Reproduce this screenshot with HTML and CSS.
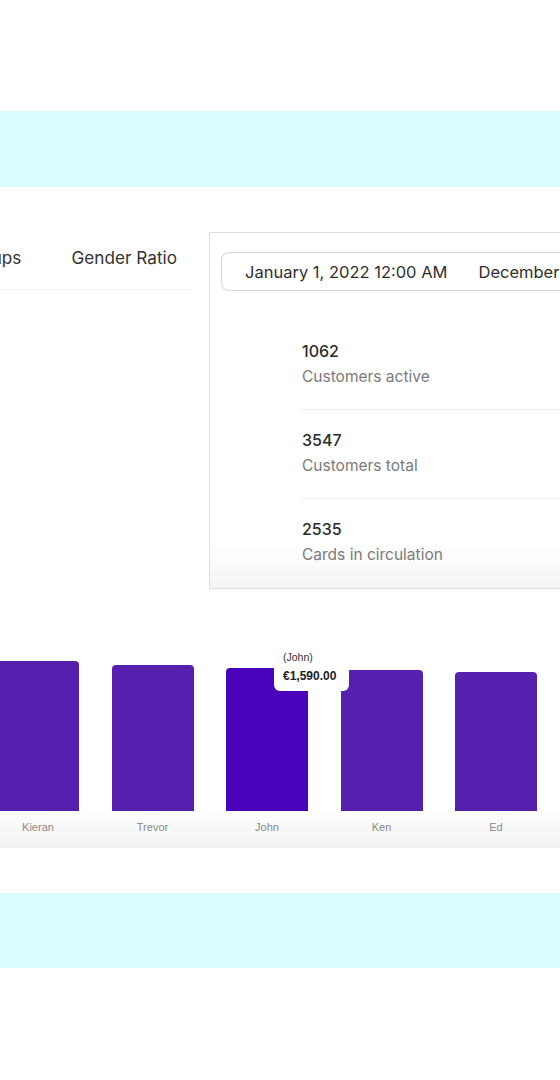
FILE: index.html
```html
<!DOCTYPE html>
<html lang="en">
<head>
  <meta charset="UTF-8">
  <title>Customer Dashboard</title>
  <link rel="stylesheet" href="styles.css">
</head>
<body>
  <div class="band band-top"></div>

  <div class="overview">
    <div class="tabs-col">
      <div class="tabs">
        <span class="tab">Age Groups</span>
        <span class="tab">Gender Ratio</span>
      </div>
    </div>
    <div class="panel">
      <div class="date-range">
        <span>January 1, 2022 12:00 AM</span>
        <span>December 31, 2022 11:59 PM</span>
      </div>
      <ul class="stats">
        <li class="stat">
          <div class="stat-value">1062</div>
          <div class="stat-label">Customers active</div>
        </li>
        <li class="stat">
          <div class="stat-value">3547</div>
          <div class="stat-label">Customers total</div>
        </li>
        <li class="stat">
          <div class="stat-value">2535</div>
          <div class="stat-label">Cards in circulation</div>
        </li>
      </ul>
    </div>
  </div>

  <div class="chart">
    <div class="bars">
      <div class="bar-col"><div class="bar" style="height:150px"></div></div>
      <div class="bar-col"><div class="bar" style="height:146px"></div></div>
      <div class="bar-col">
        <div class="bar active" style="height:143px"></div>
        <div class="tooltip">
          <div class="tooltip-name">(John)</div>
          <div class="tooltip-value">€1,590.00</div>
        </div>
      </div>
      <div class="bar-col"><div class="bar" style="height:141px"></div></div>
      <div class="bar-col"><div class="bar" style="height:139px"></div></div>
    </div>
    <div class="labels">
      <span class="label">Kieran</span>
      <span class="label">Trevor</span>
      <span class="label">John</span>
      <span class="label">Ken</span>
      <span class="label">Ed</span>
    </div>
  </div>

  <div class="band band-bottom"></div>
</body>
</html>
```

FILE: styles.css
```css
html, body { margin: 0; padding: 0; }
body { width: 560px; height: 1080px; overflow: hidden; background: #fff; font-family: Inter, "Noto Sans", sans-serif; color: #2b2b2b; }

.band { height: 76px; background: #dbfdfe; }
.band-top { margin-top: 111px; }
.band-bottom { margin-top: 45px; height: 75px; }

.overview { display: flex; margin-top: 45px; height: 357px; }
.tabs-col { width: 193px; flex-shrink: 0; overflow: hidden; }
.tabs { display: flex; justify-content: flex-end; gap: 50px; padding: 16px 16px 21px 0; border-bottom: 1px solid #f0f0f0; white-space: nowrap; }
.tab { font-size: 17.2px; line-height: 20px; color: #333; }

.panel { margin-left: 16px; width: 420px; flex-shrink: 0; border: 1px solid #d9dddd; border-right: none; box-sizing: border-box; background: linear-gradient(to bottom, #fff 0, #fff 88%, #f4f4f4 100%); }
.date-range { display: flex; gap: 31px; margin: 19px 0 0 11px; height: 39px; box-sizing: border-box; padding-left: 23px; align-items: center; border: 1px solid #d6d6d6; border-right: none; border-radius: 8px 0 0 8px; font-size: 16.5px; color: #2f2f2f; white-space: nowrap; }

.stats { list-style: none; margin: 48px 0 0 92px; padding: 0; }
.stat { padding: 0 0 20px; border-bottom: 1px solid #eeeeee; }
.stat + .stat { padding-top: 18px; }
.stat:last-child { border-bottom: none; }
.stat-value { font-size: 16px; line-height: 24px; font-weight: 500; color: #2b2b2b; }
.stat-label { font-size: 15.5px; line-height: 24px; color: #7a7a7a; margin-top: 2px; }

.chart { background: linear-gradient(to bottom, #fff 0, #fff 85%, #f1f1f1 100%); }
.bars { display: flex; align-items: flex-end; gap: 32.5px; height: 222px; margin-left: -3px; }
.bar-col { position: relative; width: 82px; flex-shrink: 0; }
.bar { background: #5520ad; border-radius: 4px 4px 0 0; }
.bar.active { background: #4a02bb; }
.tooltip { position: absolute; left: 48px; top: -22px; width: 75px; padding: 5px 0 6px 9px; box-sizing: border-box; background: #fff; border-radius: 6px; font-family: "Liberation Sans", Arial, sans-serif; white-space: nowrap; z-index: 2; }
.tooltip-name { font-size: 10.5px; line-height: 13px; color: #333; }
.tooltip-value { font-size: 12px; line-height: 18px; font-weight: bold; color: #222; margin-top: 3px; }

.labels { display: flex; gap: 32.5px; margin-left: -3px; height: 37px; padding-top: 10px; box-sizing: border-box; }
.label { width: 82px; flex-shrink: 0; text-align: center; font-family: "Liberation Sans", Arial, sans-serif; font-size: 11px; line-height: 13px; color: #888; }
```
